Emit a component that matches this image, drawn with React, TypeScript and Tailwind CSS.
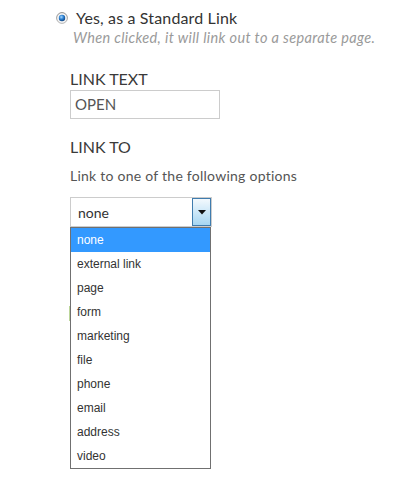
import React from "react";

const options = [
  "none",
  "external link",
  "page",
  "form",
  "marketing",
  "file",
  "phone",
  "email",
  "address",
  "video",
];

function Radio() {
  return (
    <svg width="12" height="12" viewBox="0 0 12 12" className="shrink-0">
      <defs>
        <radialGradient id="rg" cx="0.4" cy="0.35" r="0.7">
          <stop offset="0" stopColor="#a9d8ff" />
          <stop offset="0.5" stopColor="#2a7fd0" />
          <stop offset="1" stopColor="#0d3e7a" />
        </radialGradient>
        <linearGradient id="ring" x1="0" y1="0" x2="0" y2="1">
          <stop offset="0" stopColor="#8a8a8a" />
          <stop offset="1" stopColor="#b8b8b8" />
        </linearGradient>
      </defs>
      <circle cx="6" cy="6" r="5.4" fill="#f4f4f4" stroke="url(#ring)" strokeWidth="1" />
      <circle cx="6" cy="6" r="3.2" fill="url(#rg)" />
    </svg>
  );
}

export default function App() {
  return (
    <div
      className="relative w-[403px] h-[486px] bg-white overflow-hidden"
      style={{ fontFamily: "Lato, 'Open Sans', sans-serif" }}
    >
      <div className="pl-[56px] pt-[8px]">
        <div className="flex items-center gap-[8px] h-[20px]">
          <Radio />
          <span className="text-[16px] leading-[20px] tracking-[0.15px] text-[#333]">
            Yes, as a Standard Link
          </span>
        </div>
        <div className="pl-[17px] text-[14.5px] leading-[20px] tracking-[0.35px] italic text-[#9a9a9a]">
          When clicked, it will link out to a separate page.
        </div>

        <div className="pl-[14px]">
          <div className="mt-[21px] text-[16px] leading-[20px] text-[#3a3a3a]">
            LINK TEXT
          </div>
          <div className="mt-[1px] w-[150px] h-[29px] border border-[#cccccc] flex items-center pl-[4px] text-[15px] text-[#555]">
            OPEN
          </div>

          <div className="mt-[18px] text-[16px] leading-[20px] text-[#3a3a3a]">
            LINK TO
          </div>
          <div className="mt-[9px] text-[14px] leading-[20px] tracking-[0.25px] text-[#555]">
            Link to one of the following options
          </div>

          <div className="relative mt-[11px] w-[142px]">
            <div className="h-[30px] border border-[#cccccc] flex items-stretch">
              <div className="flex-1 flex items-center pl-[7px] text-[14px] text-[#333]">
                none
              </div>
              <div className="w-[19px] border border-[#3f7cae] bg-gradient-to-b from-[#f3f9fd] to-[#a6d6f2] flex items-center justify-center">
                <svg width="8" height="5" viewBox="0 0 8 5">
                  <path d="M0 0 H8 L4 4.5 Z" fill="#111" />
                </svg>
              </div>
            </div>
            <div className="absolute left-0 top-[30px] w-[141px] border border-[#707070] bg-white z-10">
              {options.map((o, i) => (
                <div
                  key={o}
                  className={
                    "h-[24px] flex items-center pl-[6px] text-[12px] " +
                    (i === 0 ? "bg-[#3399ff] text-white" : "text-[#333]")
                  }
                  style={{ fontFamily: "'Liberation Sans', Arial, sans-serif" }}
                >
                  {o}
                </div>
              ))}
            </div>
            <div className="absolute left-[-1px] top-[109px] w-[1px] h-[15px] bg-[#bcd69a]" />
          </div>
        </div>
      </div>
    </div>
  );
}
